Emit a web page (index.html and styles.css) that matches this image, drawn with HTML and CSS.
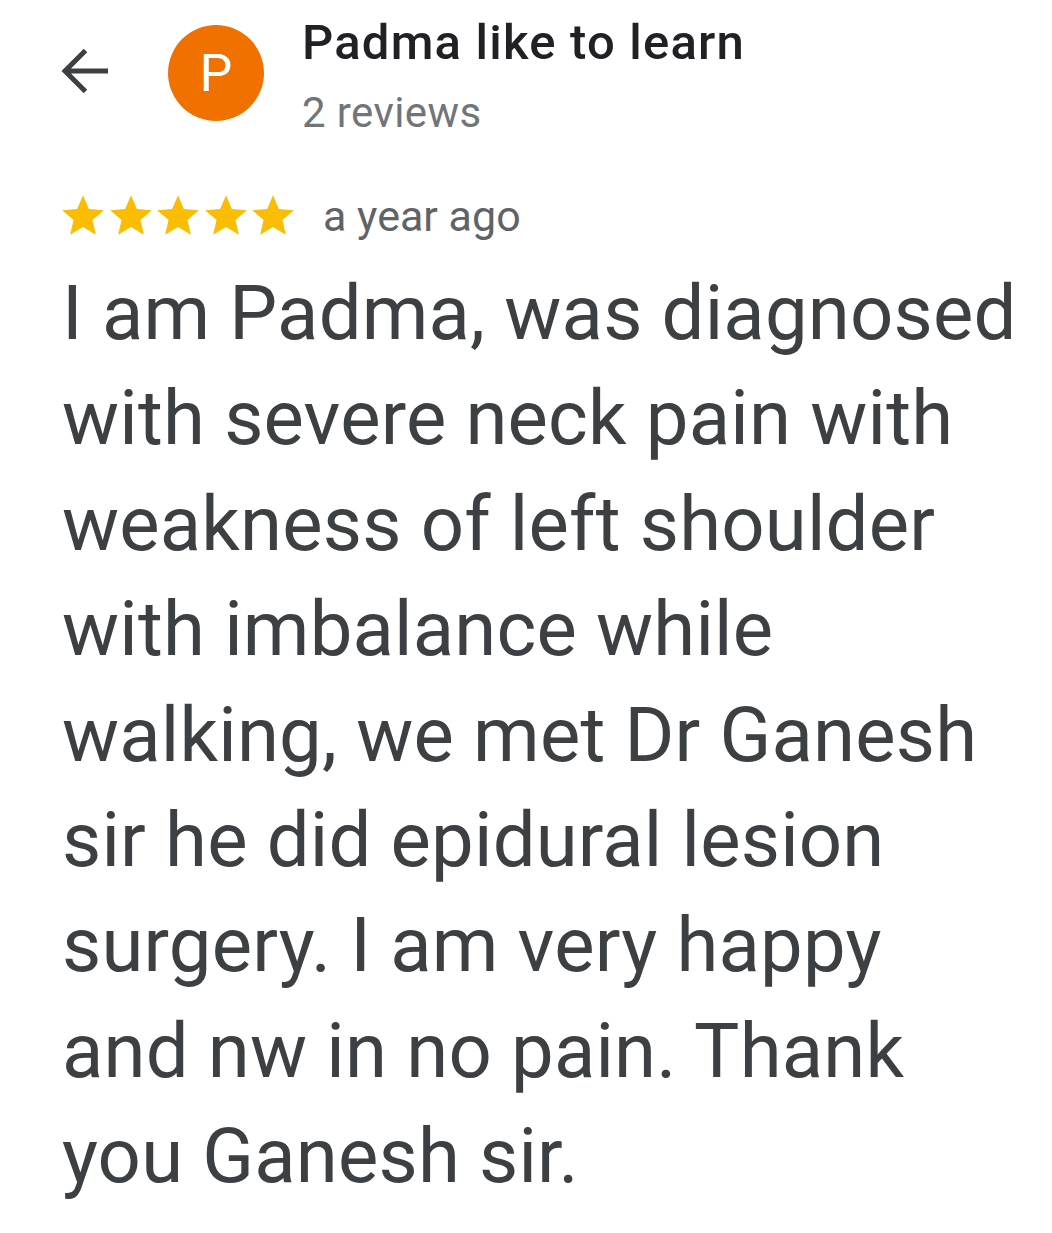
FILE: index.html
```html
<!DOCTYPE html>
<html>
<head>
<meta charset="utf-8">
<link rel="stylesheet" href="styles.css">
</head>
<body>
<div class="page">
  <header class="head">
    <svg class="back" viewBox="0 0 48 48" width="48" height="48"><path d="M48 24H5M25.5 3.5L5 24l20.5 20.5" fill="none" stroke="#3c4043" stroke-width="5" stroke-linecap="butt" stroke-linejoin="miter"/></svg>
    <div class="avatar">P</div>
    <div class="who">
      <div class="name">Padma like to learn</div>
      <div class="count">2 reviews</div>
    </div>
  </header>
  <div class="meta">
    <div class="stars">
      <svg viewBox="0 0 24 24"><path d="M12 17.27L18.18 21l-1.64-7.03L22 9.24l-7.19-.61L12 2 9.19 8.63 2 9.24l5.46 4.73L5.82 21z"/></svg>
      <svg viewBox="0 0 24 24"><path d="M12 17.27L18.18 21l-1.64-7.03L22 9.24l-7.19-.61L12 2 9.19 8.63 2 9.24l5.46 4.73L5.82 21z"/></svg>
      <svg viewBox="0 0 24 24"><path d="M12 17.27L18.18 21l-1.64-7.03L22 9.24l-7.19-.61L12 2 9.19 8.63 2 9.24l5.46 4.73L5.82 21z"/></svg>
      <svg viewBox="0 0 24 24"><path d="M12 17.27L18.18 21l-1.64-7.03L22 9.24l-7.19-.61L12 2 9.19 8.63 2 9.24l5.46 4.73L5.82 21z"/></svg>
      <svg viewBox="0 0 24 24"><path d="M12 17.27L18.18 21l-1.64-7.03L22 9.24l-7.19-.61L12 2 9.19 8.63 2 9.24l5.46 4.73L5.82 21z"/></svg>
    </div>
    <span class="when">a year ago</span>
  </div>
  <p class="text">I am Padma, was diagnosed<br>with severe neck pain with<br>weakness of left shoulder<br>with imbalance while<br>walking, we met Dr Ganesh<br>sir he did epidural lesion<br>surgery. I am very happy<br>and nw in no pain. Thank<br>you Ganesh sir.</p>
</div>
</body>
</html>
```
FILE: styles.css
```css
html, body { margin: 0; padding: 0; background: #fff; }
body { font-family: Roboto, "Noto Sans", sans-serif; }
.page { width: 1052px; padding: 0 0 0 62px; box-sizing: border-box; }
.head { display: flex; align-items: flex-start; height: 146px; }
.back { margin-left: -2px; margin-top: 47px; flex: none; }
.avatar {
  width: 96px; height: 96px; border-radius: 50%;
  background: #f07000; color: #fff;
  display: flex; align-items: center; justify-content: center;
  font-size: 52px; margin-left: 60px; margin-top: 25px; flex: none;
}
.who { margin-left: 38px; margin-top: 15px; }
.name { font-size: 49px; color: #202124; line-height: 56px; font-weight: 500; letter-spacing: 1.2px; }
.count { font-size: 42px; color: #70757a; line-height: 56px; margin-top: 13.6px; letter-spacing: 0.4px; }
.meta { display: flex; align-items: center; margin-top: 45px; height: 50px; }
.stars { display: flex; }
.stars svg { width: 50px; height: 50px; fill: #fbbc04; margin-right: -2.4px; flex: none; }
.stars svg:first-child { margin-left: -4px; }
.when { font-size: 43px; color: #5f6368; margin-left: 27px; }
.text { margin: 20px 0 0; font-size: 76px; line-height: 105.4px; color: #3c4043; letter-spacing: 0.2px; white-space: nowrap; }
```
